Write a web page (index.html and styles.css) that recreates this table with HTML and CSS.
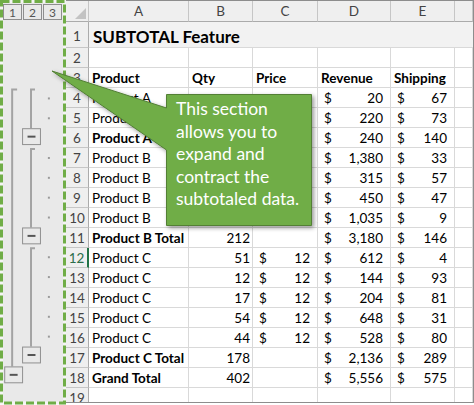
FILE: index.html
```html
<!DOCTYPE html>
<html>
<head>
<meta charset="utf-8">
<link rel="stylesheet" href="styles.css">
</head>
<body>
<div class="page">
<div class="frame">
  <div class="outline">
    <div class="levels"><span class="lvl">1</span><span class="lvl">2</span><span class="lvl">3</span></div>
    <svg class="bars" width="66" height="383" viewBox="0 22 66 383">
      <g fill="none" stroke="#a3a3a3" stroke-width="2">
        <path d="M17,90 H12 V369"/>
        <path d="M35,90 H31 V129"/>
        <path d="M35,150 H31 V229"/>
        <path d="M35,250 H31 V349"/>
      </g>
      <g fill="#e9e9e9" stroke="#8f8f8f" stroke-width="1">
        <rect x="22.5" y="129.5" width="18" height="16"/>
        <rect x="22.5" y="229.5" width="18" height="16"/>
        <rect x="22.5" y="349.5" width="18" height="16"/>
        <rect x="4.5" y="369.5" width="18" height="16"/>
      </g>
      <g stroke="#555" stroke-width="2">
        <path d="M27.5,137.5 H35.5"/>
        <path d="M27.5,237.5 H35.5"/>
        <path d="M27.5,357.5 H35.5"/>
        <path d="M9.5,377.5 H17.5"/>
      </g>
      <g fill="#9a9a9a">
        <rect x="48" y="98" width="2" height="2"/>
        <rect x="48" y="118" width="2" height="2"/>
        <rect x="48" y="158" width="2" height="2"/>
        <rect x="48" y="178" width="2" height="2"/>
        <rect x="48" y="198" width="2" height="2"/>
        <rect x="48" y="218" width="2" height="2"/>
        <rect x="48" y="258" width="2" height="2"/>
        <rect x="48" y="278" width="2" height="2"/>
        <rect x="48" y="298" width="2" height="2"/>
        <rect x="48" y="318" width="2" height="2"/>
        <rect x="48" y="338" width="2" height="2"/>
      </g>
    </svg>
  </div>

  <div class="sheet">
    <div class="hd corner"></div><div class="hd">A</div><div class="hd">B</div><div class="hd">C</div><div class="hd">D</div><div class="hd">E</div><div class="hd"></div>

    <div class="rh r1">1</div><div class="title">SUBTOTAL Feature</div>

    <div class="rh">2</div><div></div><div></div><div></div><div></div><div></div><div></div>

    <div class="rh">3</div><div class="b">Product</div><div class="b">Qty</div><div class="b">Price</div><div class="b">Revenue</div><div class="b">Shipping</div><div></div>

    <div class="rh">4</div><div>Product A</div><div></div><div></div><div class="acct"><span>$</span><span>20</span></div><div class="acct"><span>$</span><span>67</span></div><div></div>
    <div class="rh">5</div><div>Product A</div><div></div><div></div><div class="acct"><span>$</span><span>220</span></div><div class="acct"><span>$</span><span>73</span></div><div></div>
    <div class="rh">6</div><div class="b">Product A Total</div><div></div><div></div><div class="acct"><span>$</span><span>240</span></div><div class="acct"><span>$</span><span>140</span></div><div></div>
    <div class="rh">7</div><div>Product B</div><div></div><div></div><div class="acct"><span>$</span><span>1,380</span></div><div class="acct"><span>$</span><span>33</span></div><div></div>
    <div class="rh">8</div><div>Product B</div><div></div><div></div><div class="acct"><span>$</span><span>315</span></div><div class="acct"><span>$</span><span>57</span></div><div></div>
    <div class="rh">9</div><div>Product B</div><div></div><div></div><div class="acct"><span>$</span><span>450</span></div><div class="acct"><span>$</span><span>47</span></div><div></div>
    <div class="rh">10</div><div>Product B</div><div></div><div></div><div class="acct"><span>$</span><span>1,035</span></div><div class="acct"><span>$</span><span>9</span></div><div></div>
    <div class="rh">11</div><div class="b">Product B Total</div><div class="n">212</div><div></div><div class="acct"><span>$</span><span>3,180</span></div><div class="acct"><span>$</span><span>146</span></div><div></div>
    <div class="rh active">12</div><div>Product C</div><div class="n">51</div><div class="acct"><span>$</span><span>12</span></div><div class="acct"><span>$</span><span>612</span></div><div class="acct"><span>$</span><span>4</span></div><div></div>
    <div class="rh">13</div><div>Product C</div><div class="n">12</div><div class="acct"><span>$</span><span>12</span></div><div class="acct"><span>$</span><span>144</span></div><div class="acct"><span>$</span><span>93</span></div><div></div>
    <div class="rh">14</div><div>Product C</div><div class="n">17</div><div class="acct"><span>$</span><span>12</span></div><div class="acct"><span>$</span><span>204</span></div><div class="acct"><span>$</span><span>81</span></div><div></div>
    <div class="rh">15</div><div>Product C</div><div class="n">54</div><div class="acct"><span>$</span><span>12</span></div><div class="acct"><span>$</span><span>648</span></div><div class="acct"><span>$</span><span>31</span></div><div></div>
    <div class="rh">16</div><div>Product C</div><div class="n">44</div><div class="acct"><span>$</span><span>12</span></div><div class="acct"><span>$</span><span>528</span></div><div class="acct"><span>$</span><span>80</span></div><div></div>
    <div class="rh">17</div><div class="b">Product C Total</div><div class="n">178</div><div></div><div class="acct"><span>$</span><span>2,136</span></div><div class="acct"><span>$</span><span>289</span></div><div></div>
    <div class="rh">18</div><div class="b">Grand Total</div><div class="n">402</div><div></div><div class="acct"><span>$</span><span>5,556</span></div><div class="acct"><span>$</span><span>575</span></div><div></div>
    <div class="rh">19</div><div></div><div></div><div></div><div></div><div></div><div></div>
  </div>
</div>

  <svg class="dash" width="474" height="405">
    <rect x="1.5" y="1.5" width="63" height="401.5" fill="none" stroke="#f4f4f4" stroke-width="3"/>
    <rect x="1.5" y="1.5" width="63" height="401.5" fill="none" stroke="#70ad47" stroke-width="3" stroke-dasharray="8 3"/>
  </svg>

  <svg class="callout" width="474" height="405">
    <defs>
      <filter id="sh" x="-20%" y="-20%" width="140%" height="140%">
        <feDropShadow dx="2" dy="2" stdDeviation="2" flood-color="#000" flood-opacity="0.4"/>
      </filter>
    </defs>
    <path d="M166.5,94.5 H311.5 V225.5 H166.5 V150 L52,71 L166.5,108 Z" fill="#70ad47" stroke="#527f35" stroke-width="1" filter="url(#sh)"/>
  </svg>
  <div class="callout-text">This section<br>allows you to<br>expand and<br>contract the<br>subtotaled data.</div>
</div>
</body>
</html>
```

FILE: styles.css
```css
body {
  margin: 0;
  background: #fff;
}

.page {
  position: relative;
  width: 474px;
  height: 405px;
  overflow: hidden;
  font-family: Lato, "Open Sans", sans-serif;
}

.frame {
  width: 474px;
  height: 403px;
  box-sizing: border-box;
  border-top: 1px solid #8d8d8d;
  border-right: 1px solid #8d8d8d;
  border-bottom: 1px solid #8d8d8d;
  display: flex;
  overflow: hidden;
}

.outline {
  width: 66px;
  flex: none;
  background: #e9e9e9;
  display: flex;
  flex-direction: column;
}

.levels {
  height: 21px;
  box-sizing: border-box;
  display: flex;
  gap: 1px;
  padding: 3px 0 0 3px;
}

.lvl {
  width: 19px;
  height: 16px;
  box-sizing: border-box;
  border: 1px solid #8e8e8e;
  font-size: 12px;
  color: #555;
  display: flex;
  align-items: center;
  justify-content: center;
}

.bars {
  display: block;
}

.sheet {
  flex: none;
  display: grid;
  grid-template-columns: 23px 100px 64px 65px 73px 64px 18px;
  grid-template-rows: 21px 26px;
  grid-auto-rows: 20px;
}

.sheet > div {
  box-sizing: border-box;
  border-right: 1px solid #d9d9d9;
  border-bottom: 1px solid #d9d9d9;
  white-space: nowrap;
  font-size: 13.5px;
  line-height: 21px;
  padding: 0 3px;
  color: #000;
}

.sheet > .hd {
  background: #efefef;
  border-color: #c6c6c6;
  border-bottom-color: #ababab;
  text-align: center;
  color: #444;
  line-height: 20px;
}

.sheet > .corner {
  position: relative;
}

.corner::after {
  content: "";
  position: absolute;
  right: 2px;
  bottom: 2px;
  width: 11px;
  height: 11px;
  background: #c3c3c3;
  clip-path: polygon(100% 0, 100% 100%, 0 100%);
}

.sheet > .rh {
  background: #efefef;
  border-color: #c6c6c6;
  border-right-color: #ababab;
  text-align: center;
  color: #444;
  padding: 0;
}

.sheet > .r1 {
  line-height: 29px;
}

.sheet > .active {
  color: #2b6e4a;
  border-right: 2px solid #217346;
}

.sheet > .title {
  grid-column: span 6;
  background: #f2f2f2;
  border-right: none;
  font-weight: 700;
  font-size: 17px;
  line-height: 29px;
  padding-left: 4px;
}

.sheet > .b {
  font-weight: 700;
}

.sheet > .n {
  text-align: right;
  padding-right: 2px;
}

.sheet > .acct {
  display: flex;
  justify-content: space-between;
  padding: 0 7px 0 6px;
}

.dash,
.callout {
  position: absolute;
  left: 0;
  top: 0;
  pointer-events: none;
}

.callout-text {
  position: absolute;
  left: 176px;
  top: 98px;
  color: #fff;
  font-size: 17.5px;
  line-height: 22.5px;
  white-space: nowrap;
}
```
